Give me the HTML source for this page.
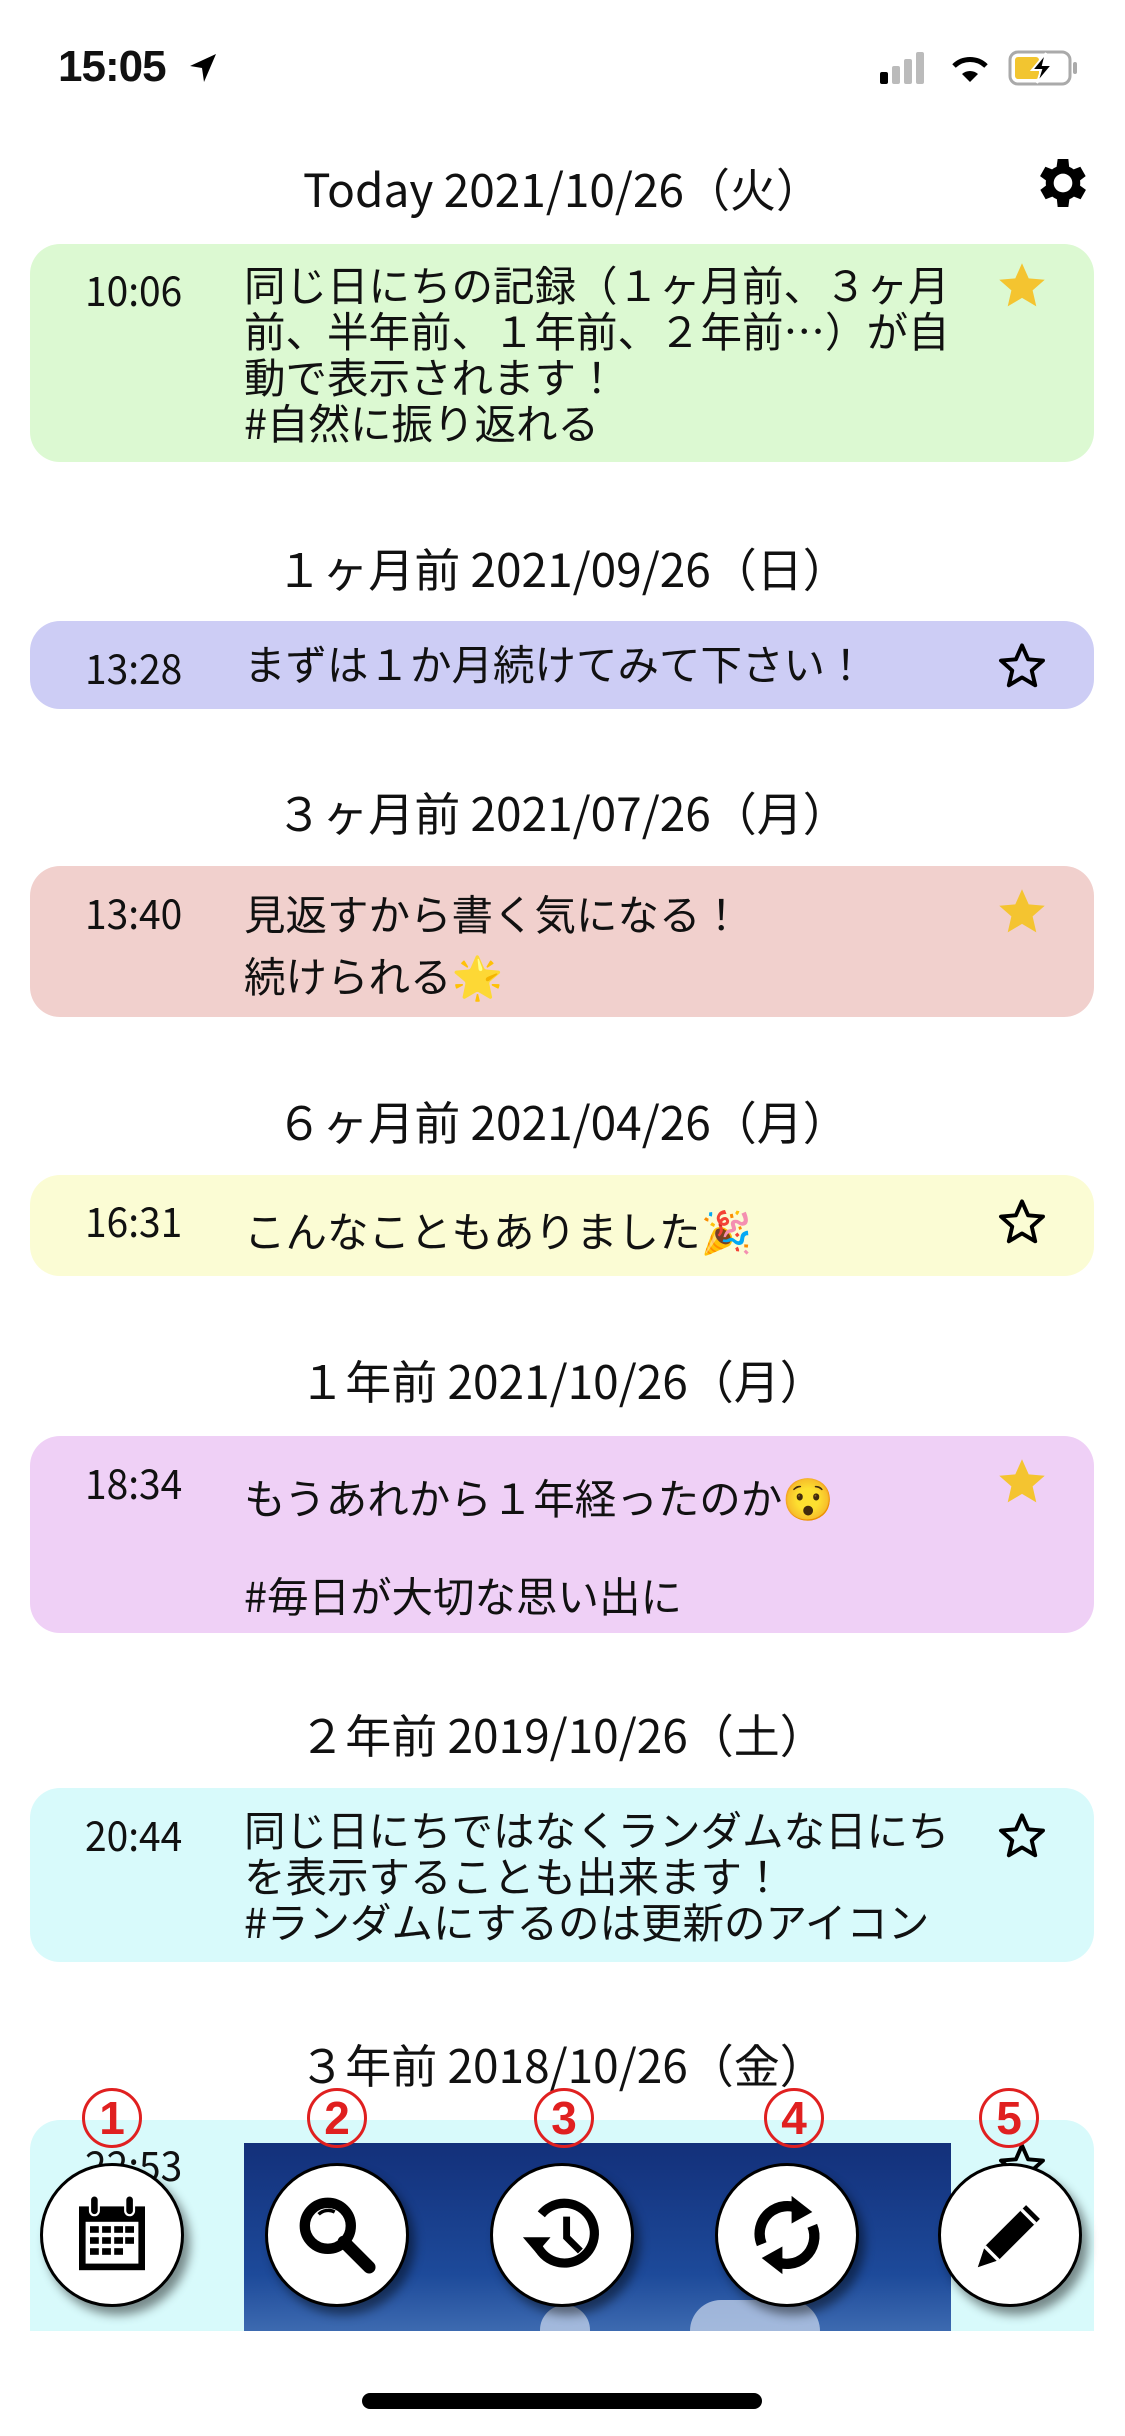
<!DOCTYPE html>
<html><head><meta charset="utf-8"><style>
*{margin:0;padding:0;box-sizing:border-box}
body{width:1125px;height:2436px;background:#fff;position:relative;overflow:hidden;font-family:"Liberation Sans","Noto Sans CJK JP",sans-serif;color:#111}
.abs{position:absolute}
.h{position:absolute;left:0;width:1125px;text-align:center;font-size:46px;font-family:"Noto Sans CJK JP",sans-serif;font-weight:400;line-height:50px;color:#111}
.card{position:absolute;left:30px;width:1064px;border-radius:30px}
.t{position:absolute;left:85px;font-size:41px;font-family:"Noto Sans CJK JP",sans-serif;font-weight:400;transform:scaleX(.95);transform-origin:left}
.x{position:absolute;left:244px;font-size:41.5px;font-family:"Noto Sans CJK JP",sans-serif;font-weight:400;line-height:46px;white-space:nowrap}
.st{position:absolute;left:996px;width:52px;height:52px}
.btn{position:absolute;top:2163px;width:144px;height:144px;border-radius:50%;background:#fff;border:3px solid #000;box-shadow:6px 8px 10px rgba(0,0,0,.45);display:flex;align-items:center;justify-content:center}
.num{position:absolute;top:2088px;width:60px;height:60px;border:3px solid #e02020;border-radius:50%;color:#e02020;font-weight:bold;font-size:46px;text-align:center;line-height:54px;font-family:"Liberation Sans",sans-serif}
</style></head><body>
<div class="abs" style="left:58px;top:42px;font-size:44px;font-weight:bold;letter-spacing:-1px">15:05</div>
<svg class="abs" style="left:188px;top:52px" width="30" height="32" viewBox="0 0 30 32"><path d="M28 2 L2 14 L14 16 L16 30 Z" fill="#000"/></svg>
<svg class="abs" style="left:880px;top:50px" width="50" height="34"><rect x="0" y="22" width="8" height="12" rx="2" fill="#000"/><rect x="12" y="16" width="8" height="18" rx="2" fill="#bbb"/><rect x="24" y="9" width="8" height="25" rx="2" fill="#bbb"/><rect x="36" y="2" width="8" height="32" rx="2" fill="#bbb"/></svg>
<svg class="abs" style="left:948px;top:50px" width="44" height="34" viewBox="0 0 44 34"><path d="M22 32 L14 24 A12 12 0 0 1 30 24 Z" fill="#000"/><path d="M6 16 A23 23 0 0 1 38 16" stroke="#000" stroke-width="5" fill="none"/><path d="M11 21 A16 16 0 0 1 33 21" stroke="#fff" stroke-width="2" fill="none"/></svg>
<svg class="abs" style="left:1008px;top:50px" width="72" height="36" viewBox="0 0 72 36"><rect x="2" y="2" width="60" height="32" rx="8" fill="none" stroke="#aaa" stroke-width="3"/><rect x="7" y="7" width="24" height="22" rx="3" fill="#f2c530"/><rect x="65" y="12" width="4" height="12" rx="2" fill="#aaa"/><path d="M38 3 L24 20 L33 20 L29 33 L44 15 L35 15 Z" fill="#000" stroke="#fff" stroke-width="2"/></svg>

<svg class="abs" style="left:1031px;top:151px" width="64" height="64" viewBox="0 0 24 24"><path fill="#000" d="M19.4 13a7.5 7.5 0 0 0 0-2l2.1-1.6-2-3.5-2.5 1a7.4 7.4 0 0 0-1.7-1L15 3h-4l-.4 2.9a7.4 7.4 0 0 0-1.7 1l-2.5-1-2 3.5L6.6 11a7.5 7.5 0 0 0 0 2l-2.1 1.6 2 3.5 2.5-1a7.4 7.4 0 0 0 1.7 1L11 21h4l.4-2.9a7.4 7.4 0 0 0 1.7-1l2.5 1 2-3.5zM13 15.5a3.5 3.5 0 1 1 0-7 3.5 3.5 0 0 1 0 7z" transform="translate(-1 0)"/></svg>

<div class="h" style="top:163px">Today 2021/10/26（火）</div>
<div class="card" style="top:244px;height:218px;background:#dcf9d2"></div>
<div class="t" style="top:258px">10:06</div>
<div class="x" style="top:260px">同じ日にちの記録（１ヶ月前、３ヶ月<br>前、半年前、１年前、２年前…）が自<br>動で表示されます！<br>#自然に振り返れる</div>

<div class="h" style="top:543px">１ヶ月前 2021/09/26（日）</div>
<div class="card" style="top:621px;height:88px;background:#cdcdf5"></div>
<div class="t" style="top:636px">13:28</div>
<div class="x" style="top:639px">まずは１か月続けてみて下さい！</div>

<div class="h" style="top:787px">３ヶ月前 2021/07/26（月）</div>
<div class="card" style="top:866px;height:151px;background:#f1d0cd"></div>
<div class="t" style="top:881px">13:40</div>
<div class="x" style="top:881px;line-height:62px">見返すから書く気になる！<br>続けられる🌟</div>

<div class="h" style="top:1096px">６ヶ月前 2021/04/26（月）</div>
<div class="card" style="top:1175px;height:101px;background:#fbfcd4"></div>
<div class="t" style="top:1189px">16:31</div>
<div class="x" style="top:1206px">こんなこともありました🎉</div>

<div class="h" style="top:1355px">１年前 2021/10/26（月）</div>
<div class="card" style="top:1436px;height:197px;background:#efd0f6"></div>
<div class="t" style="top:1451px">18:34</div>
<div class="x" style="top:1447px;line-height:98px">もうあれから１年経ったのか😯<br>#毎日が大切な思い出に</div>

<div class="h" style="top:1709px">２年前 2019/10/26（土）</div>
<div class="card" style="top:1788px;height:174px;background:#d8fafb"></div>
<div class="t" style="top:1803px">20:44</div>
<div class="x" style="top:1805px">同じ日にちではなくランダムな日にち<br>を表示することも出来ます！<br>#ランダムにするのは更新のアイコン</div>

<div class="h" style="top:2039px">３年前 2018/10/26（金）</div>
<div class="abs" style="left:30px;top:2120px;width:1064px;height:211px;border-radius:30px 30px 0 0;background:#d8fafb"></div>
<div class="t" style="top:2133px">22:53</div>
<div class="abs" style="left:244px;top:2143px;width:707px;height:188px;background:linear-gradient(#13307a,#1d4a9a 70%,#3d6ab0)"></div>
<div class="abs" style="left:540px;top:2305px;width:50px;height:26px;background:#cfdcef;border-radius:30px 30px 0 0;opacity:.7"></div>
<div class="abs" style="left:690px;top:2300px;width:130px;height:31px;background:#cfdcef;border-radius:40px 40px 0 0;opacity:.7"></div>

<svg class="st" style="top:260px" viewBox="0 0 24 24"><path d="M12 1.5l3.1 7 7.4.6-5.6 4.9 1.7 7.4L12 17.5 5.4 21.4l1.7-7.4L1.5 9.1l7.4-.6z" fill="#f4c430"/></svg>
<svg class="st" style="top:640px" viewBox="0 0 24 24"><path d="M12 2.5l2.8 6.4 6.9.6-5.2 4.6 1.6 6.8L12 17.3l-6.1 3.6 1.6-6.8-5.2-4.6 6.9-.6z" fill="none" stroke="#000" stroke-width="1.8" stroke-linejoin="round"/></svg>
<svg class="st" style="top:886px" viewBox="0 0 24 24"><path d="M12 1.5l3.1 7 7.4.6-5.6 4.9 1.7 7.4L12 17.5 5.4 21.4l1.7-7.4L1.5 9.1l7.4-.6z" fill="#f4c430"/></svg>
<svg class="st" style="top:1196px" viewBox="0 0 24 24"><path d="M12 2.5l2.8 6.4 6.9.6-5.2 4.6 1.6 6.8L12 17.3l-6.1 3.6 1.6-6.8-5.2-4.6 6.9-.6z" fill="none" stroke="#000" stroke-width="1.8" stroke-linejoin="round"/></svg>
<svg class="st" style="top:1456px" viewBox="0 0 24 24"><path d="M12 1.5l3.1 7 7.4.6-5.6 4.9 1.7 7.4L12 17.5 5.4 21.4l1.7-7.4L1.5 9.1l7.4-.6z" fill="#f4c430"/></svg>
<svg class="st" style="top:1810px" viewBox="0 0 24 24"><path d="M12 2.5l2.8 6.4 6.9.6-5.2 4.6 1.6 6.8L12 17.3l-6.1 3.6 1.6-6.8-5.2-4.6 6.9-.6z" fill="none" stroke="#000" stroke-width="1.8" stroke-linejoin="round"/></svg>
<svg class="st" style="top:2140px" viewBox="0 0 24 24"><path d="M12 2.5l2.8 6.4 6.9.6-5.2 4.6 1.6 6.8L12 17.3l-6.1 3.6 1.6-6.8-5.2-4.6 6.9-.6z" fill="none" stroke="#000" stroke-width="1.8" stroke-linejoin="round"/></svg>

<div class="btn" style="left:40px"><svg width="88" height="88" viewBox="0 0 40 40"><rect x="5" y="7" width="30" height="29" fill="#000"/><rect x="8" y="14" width="24" height="19" fill="#fff"/><rect x="10" y="2" width="4" height="9" rx="2" fill="#000" stroke="#fff"/><rect x="26" y="2" width="4" height="9" rx="2" fill="#000" stroke="#fff"/><g fill="#000"><rect x="10" y="16" width="4" height="3"/><rect x="15.5" y="16" width="4" height="3"/><rect x="21" y="16" width="4" height="3"/><rect x="26" y="16" width="4" height="3"/><rect x="10" y="21" width="4" height="3"/><rect x="15.5" y="21" width="4" height="3"/><rect x="21" y="21" width="4" height="3"/><rect x="26" y="21" width="4" height="3"/><rect x="10" y="26" width="4" height="3"/><rect x="15.5" y="26" width="4" height="3"/><rect x="21" y="26" width="4" height="3"/></g></svg></div>
<div class="btn" style="left:265px"><svg width="92" height="92" viewBox="0 0 40 40"><circle cx="16" cy="16" r="10" fill="none" stroke="#000" stroke-width="4.5"/><path d="M23 23 L34 34" stroke="#000" stroke-width="5.5" stroke-linecap="round"/><path d="M12 11 A6 6 0 0 1 19 10" stroke="#000" stroke-width="1.5" fill="none"/></svg></div>
<div class="btn" style="left:490px"><svg width="92" height="92" viewBox="0 0 40 40"><path d="M9 24 A13 13 0 1 0 11 11" fill="none" stroke="#000" stroke-width="4"/><path d="M3 21 L9 28 L15 21 Z" fill="#000"/><path d="M22 12 V21 L28 27" fill="none" stroke="#000" stroke-width="3"/></svg></div>
<div class="btn" style="left:715px"><svg width="92" height="92" viewBox="0 0 40 40"><path d="M9 24 A12 12 0 0 1 26 9" fill="none" stroke="#000" stroke-width="4.5"/><path d="M22 3 L31 10 L22 15 Z" fill="#000"/><path d="M31 16 A12 12 0 0 1 14 31" fill="none" stroke="#000" stroke-width="4.5"/><path d="M18 37 L9 30 L18 25 Z" fill="#000"/></svg></div>
<div class="btn" style="left:938px"><svg width="92" height="92" viewBox="0 0 40 40"><path d="M6 34 L9 25 L27 7 L33 13 L15 31 Z" fill="#000"/><path d="M25 9 L31 15" stroke="#fff" stroke-width="1.5"/><path d="M9 25 L15 31" stroke="#fff" stroke-width="1.5"/></svg></div>

<div class="num" style="left:82px">1</div>
<div class="num" style="left:307px">2</div>
<div class="num" style="left:534px">3</div>
<div class="num" style="left:764px">4</div>
<div class="num" style="left:979px">5</div>

<div class="abs" style="left:362px;top:2393px;width:400px;height:16px;border-radius:8px;background:#000"></div>
</body></html>
